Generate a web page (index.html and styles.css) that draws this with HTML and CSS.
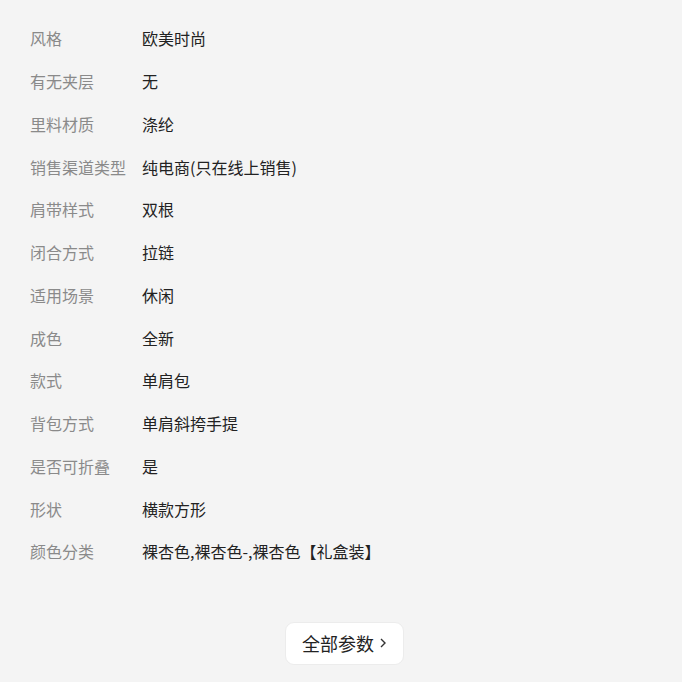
FILE: index.html
```html
<!DOCTYPE html>
<html>
<head>
	<meta charset="utf-8">
	<title>商品参数</title>
	<link rel="stylesheet" href="styles.css">
</head>
<body>

<div id="params">
	<div class="row"><span class="key">风格</span><span class="val">欧美时尚</span></div>
	<div class="row"><span class="key">有无夹层</span><span class="val">无</span></div>
	<div class="row"><span class="key">里料材质</span><span class="val">涤纶</span></div>
	<div class="row"><span class="key">销售渠道类型</span><span class="val">纯电商(只在线上销售)</span></div>
	<div class="row"><span class="key">肩带样式</span><span class="val">双根</span></div>
	<div class="row"><span class="key">闭合方式</span><span class="val">拉链</span></div>
	<div class="row"><span class="key">适用场景</span><span class="val">休闲</span></div>
	<div class="row"><span class="key">成色</span><span class="val">全新</span></div>
	<div class="row"><span class="key">款式</span><span class="val">单肩包</span></div>
	<div class="row"><span class="key">背包方式</span><span class="val">单肩斜挎手提</span></div>
	<div class="row"><span class="key">是否可折叠</span><span class="val">是</span></div>
	<div class="row"><span class="key">形状</span><span class="val">横款方形</span></div>
	<div class="row"><span class="key">颜色分类</span><span class="val">裸杏色,裸杏色-,裸杏色【礼盒装】</span></div>
</div>

<div id="more">
	<a class="moreBtn" href="#">全部参数<svg width="8" height="12" viewBox="0 0 8 12"><path d="M2 2 L6 6 L2 10" fill="none" stroke="#333" stroke-width="1.4"/></svg></a>
</div>

</body>
</html>
```

FILE: styles.css
```css
body {
	margin: 0;
	background: #f4f4f4;
	font-family: "Noto Sans CJK SC", "Liberation Sans", sans-serif;
}

#params {
	padding: 17px 0 0 30px;
}

.row {
	display: flex;
	height: 42.75px;
	align-items: center;
	font-size: 16px;
}

.key {
	width: 112px;
	color: #8a8a8a;
}
.val {
	color: #222;
}

#more {
	display: flex;
	justify-content: center;
	padding: 49px 0 0 7px;
}

.moreBtn {
	display: flex;
	align-items: center;
	gap: 5px;
	width: 119px;
	height: 43px;
	box-sizing: border-box;
	justify-content: center;
	background: white;
	border: 1px solid #ececec;
	border-radius: 9px;
	color: #222;
	font-size: 18px;
	text-decoration: none;
}
```
